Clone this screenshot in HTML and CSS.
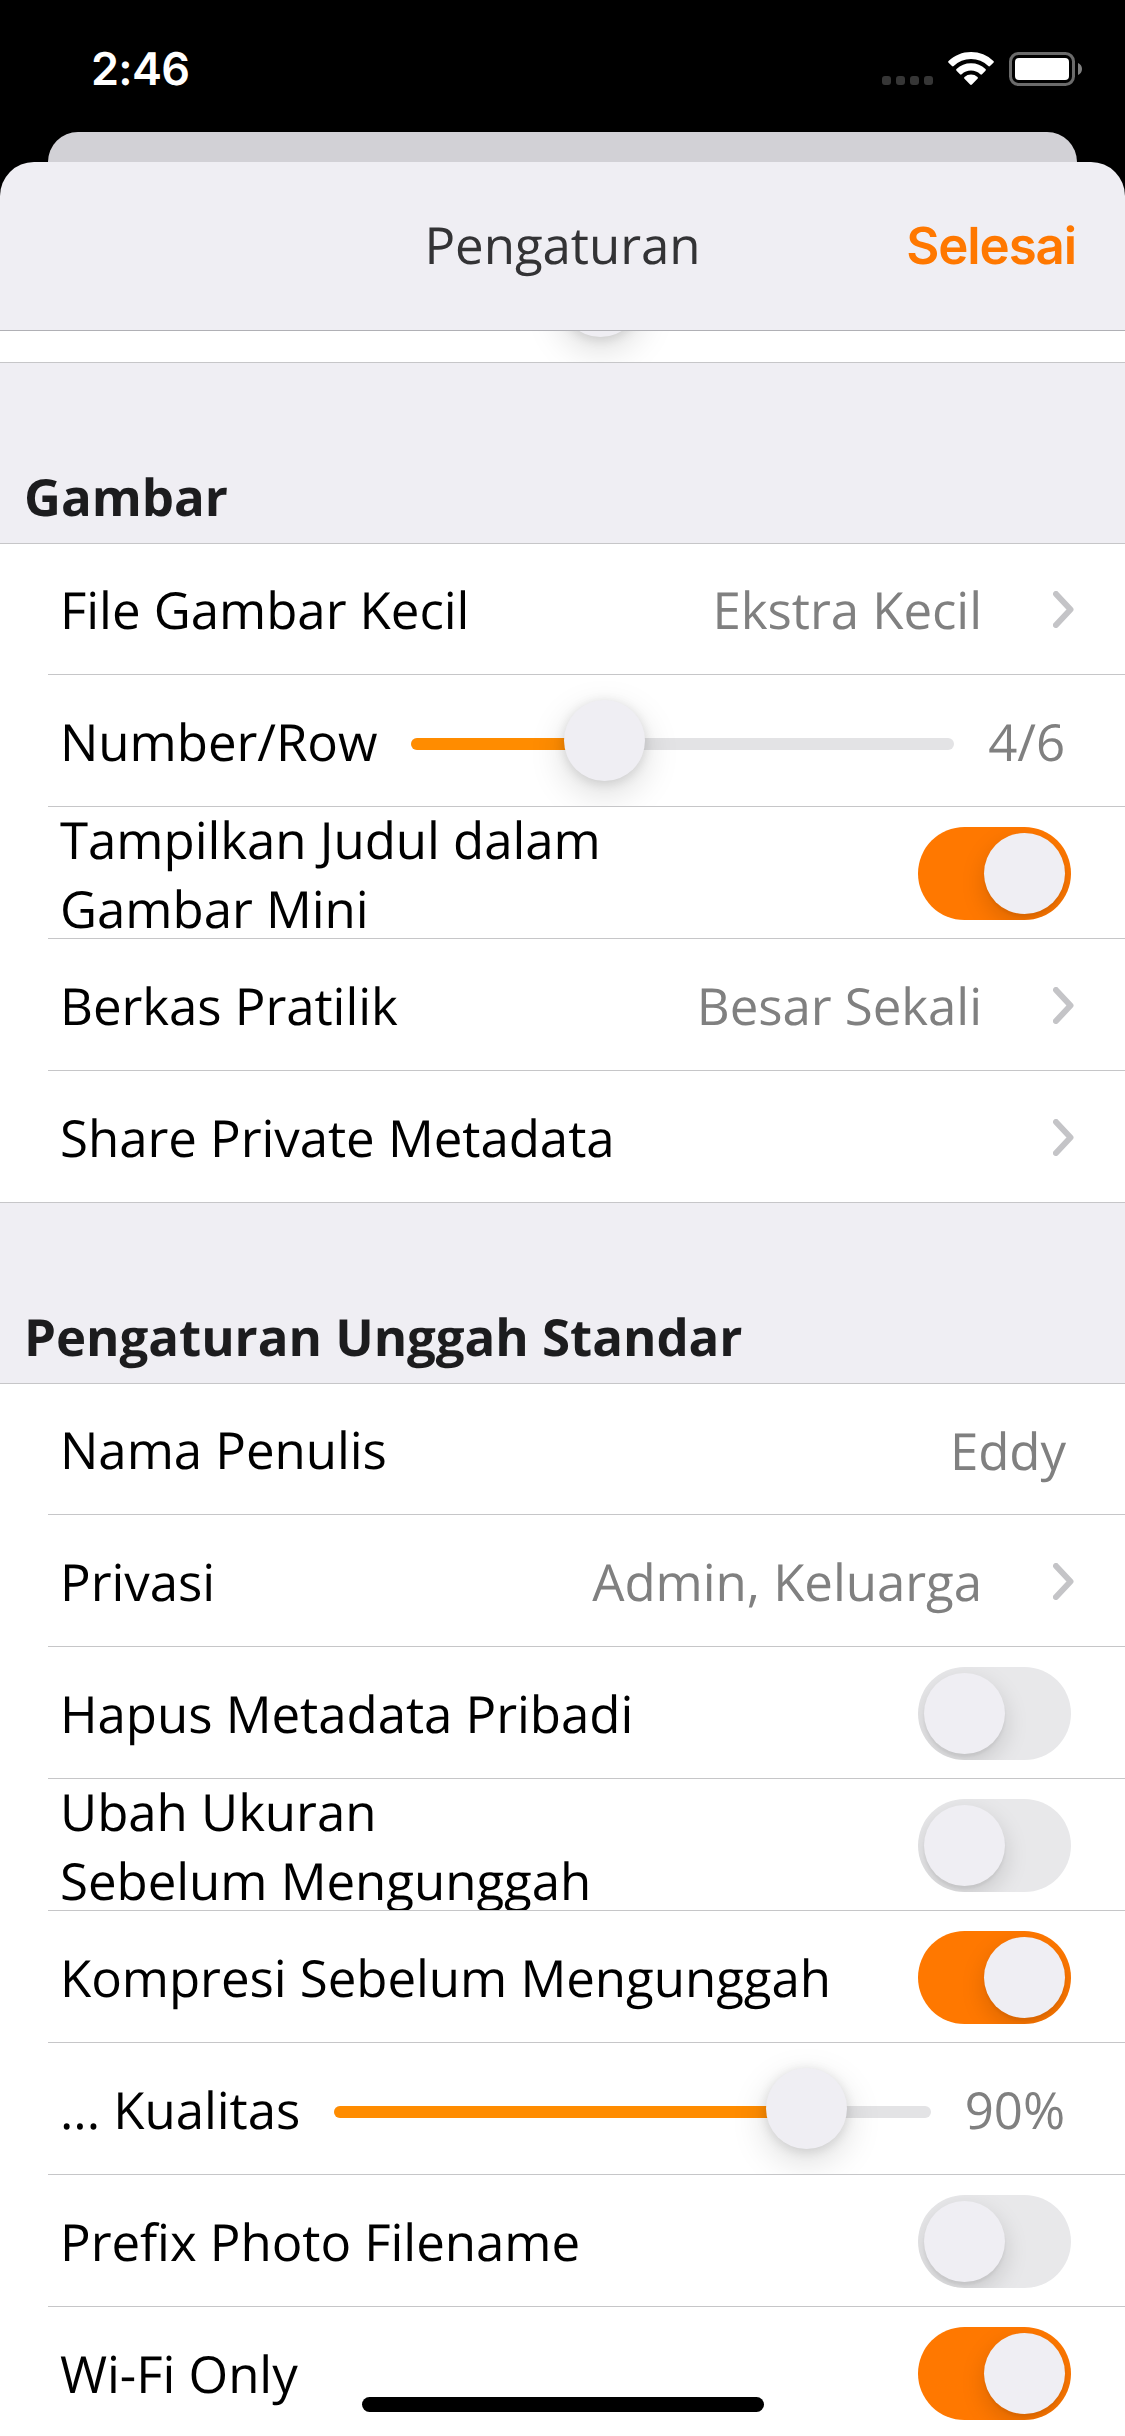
FILE: index.html
```html
<!DOCTYPE html>
<html lang="id">
<head>
<meta charset="utf-8">
<title>Pengaturan</title>
<link rel="stylesheet" href="styles.css">
</head>
<body>
<div class="screen">
  <header class="status">
    <span class="time">2:46</span>
    <div class="status-icons">
      <svg class="dots" viewBox="0 0 51 9"><g fill="#363636"><rect width="9" height="9" rx="3"/><rect x="14" width="9" height="9" rx="3"/><rect x="28" width="9" height="9" rx="3"/><rect x="42" width="9" height="9" rx="3"/></g></svg>
      <svg class="wifi" viewBox="0 0 46 34"><g fill="#fff"><path d="M23 0C14.300 0 6.400 3.400.6 8.900a1.200 1.200 0 0 0 0 1.800L4 14a1.200 1.200 0 0 0 1.700 0A25 25 0 0 1 23 7a25 25 0 0 1 17.300 7 1.200 1.200 0 0 0 1.700 0l3.400-3.300a1.200 1.200 0 0 0 0-1.800A32.500 32.500 0 0 0 23 0Z"/><path d="M23 11.300a21 21 0 0 0-14.500 5.800 1.200 1.200 0 0 0 0 1.700l3.500 3.400a1.200 1.200 0 0 0 1.700 0 13.600 13.600 0 0 1 18.600 0 1.200 1.200 0 0 0 1.700 0l3.500-3.400a1.200 1.200 0 0 0 0-1.700A21 21 0 0 0 23 11.300Z"/><path d="M23 22.600a10 10 0 0 0-6.500 2.400 1.200 1.200 0 0 0 0 1.800l5.600 5.700a1.300 1.300 0 0 0 1.800 0l5.600-5.700a1.200 1.200 0 0 0 0-1.800A10 10 0 0 0 23 22.600Z"/></g></svg>
      <svg class="battery" viewBox="0 0 73 34"><rect x="1.500" y="1.500" width="63" height="31" rx="8" fill="none" stroke="#6b6b6b" stroke-width="3"/><rect x="6" y="6" width="54" height="22" rx="4" fill="#fff"/><path d="M69 11c2.400 1 4 3.300 4 6s-1.600 5-4 6Z" fill="#808080"/></svg>
    </div>
  </header>
  <div class="back-card"></div>
  <main class="sheet">
    <nav class="navbar"><span></span><h1 class="title">Pengaturan</h1><a class="done">Selesai</a></nav>
    <div class="list">
      <section class="group scrolled">
        <div class="row"><div class="slider scrolled-slider"><div class="fill" style="width: 40%"></div><div class="thumb"></div></div></div>
      </section>
      <h2 class="heading">Gambar</h2>
      <section class="group">
        <div class="row"><span class="label">File Gambar Kecil</span><span class="value">Ekstra Kecil</span><svg class="chevron" viewBox="0 0 21 37"><path d="M3 3L17.500 18.500L3 34"/></svg></div>
        <div class="row"><span class="label">Number/Row</span><div class="slider count"><div class="fill" style="width: 35.600%"></div><div class="thumb"></div></div><span class="value count-value">4/6</span></div>
        <div class="row"><span class="label">Tampilkan Judul dalam<br>Gambar Mini</span><div class="switch on"><div class="knob"></div></div></div>
        <div class="row"><span class="label">Berkas Pratilik</span><span class="value">Besar Sekali</span><svg class="chevron" viewBox="0 0 21 37"><path d="M3 3L17.500 18.500L3 34"/></svg></div>
        <div class="row"><span class="label">Share Private Metadata</span><svg class="chevron" viewBox="0 0 21 37"><path d="M3 3L17.500 18.500L3 34"/></svg></div>
      </section>
      <h2 class="heading">Pengaturan Unggah Standar</h2>
      <section class="group">
        <div class="row"><span class="label">Nama Penulis</span><span class="value name">Eddy</span></div>
        <div class="row"><span class="label">Privasi</span><span class="value">Admin, Keluarga</span><svg class="chevron" viewBox="0 0 21 37"><path d="M3 3L17.500 18.500L3 34"/></svg></div>
        <div class="row"><span class="label">Hapus Metadata Pribadi</span><div class="switch"><div class="knob"></div></div></div>
        <div class="row"><span class="label">Ubah Ukuran<br>Sebelum Mengunggah</span><div class="switch"><div class="knob"></div></div></div>
        <div class="row"><span class="label">Kompresi Sebelum Mengunggah</span><div class="switch on"><div class="knob"></div></div></div>
        <div class="row"><span class="label">... Kualitas</span><div class="slider quality"><div class="fill" style="width: 79%"></div><div class="thumb"></div></div><span class="value quality-value">90%</span></div>
        <div class="row"><span class="label">Prefix Photo Filename</span><div class="switch"><div class="knob"></div></div></div>
        <div class="row"><span class="label">Wi-Fi Only</span><div class="switch on"><div class="knob"></div></div></div>
      </section>
    </div>
  </main>
  <div class="home-indicator"></div>
</div>
</body>
</html>
```
FILE: styles.css
```css
* { box-sizing: border-box; }
body { margin: 0; background: #000; }

.screen {
  position: relative;
  display: flex;
  flex-direction: column;
  width: 1125px;
  height: 2436px;
  overflow: hidden;
  background: #000;
  color: #000;
  font: 51px/69px "Open Sans", sans-serif;
  letter-spacing: -.05px;
  text-rendering: geometricPrecision;
}

/* Status bar */
.status {
  display: flex;
  justify-content: space-between;
  height: 132px;
  padding: 52px 43px 0 91px;
  flex: none;
}
.time {
  color: #fff;
  font: 600 45px/34px Inter, sans-serif;
  letter-spacing: -.7px;
}
.status-icons { display: flex; height: 34px; }
.dots { width: 51px; height: 9px; margin: 24px 15px 0 0; }
.wifi { width: 46px; height: 34px; margin-right: 15px; }
.battery { width: 73px; height: 34px; }

/* Sheet */
.back-card {
  flex: none;
  height: 30px;
  margin: 0 48px;
  border-radius: 30px 30px 0 0;
  background: #d2d1d6;
}
.sheet {
  flex: 1;
  min-height: 0;
  display: flex;
  flex-direction: column;
  overflow: hidden;
  border-radius: 34px 34px 0 0;
  background: #efeef3;
}
.navbar {
  flex: none;
  display: grid;
  grid-template-columns: 1fr auto 1fr;
  align-items: center;
  height: 169px;
  padding: 0 48px 3px;
  border-bottom: 1px solid #b0b0b5;
}
.title {
  margin: 0;
  color: #333335;
  font-size: 51px;
  font-weight: 400;
}
.done {
  justify-self: end;
  padding: 3px 1px 0 0;
  color: #ff7800;
  font: 600 51px/69px Inter, sans-serif;
  letter-spacing: -1.1px;
}

/* List */
.list { flex: 1; min-height: 0; overflow: hidden; }
.group {
  border-bottom: 1px solid #c6c6c8;
  background: #fff;
}
.heading {
  display: flex;
  align-items: flex-end;
  height: 181px;
  margin: 0;
  padding: 0 24px 12px;
  border-bottom: 1px solid #c6c6c8;
  color: #1c1c1e;
  font-size: 51px;
  font-weight: 700;
}
.scrolled {
  display: flex;
  flex-direction: column;
  justify-content: flex-end;
  height: 32px;
  overflow: hidden;
}
.row {
  flex: none;
  display: flex;
  align-items: center;
  height: 132px;
  margin-left: 48px;
  padding: 2px 54px 0 12px;
  overflow: hidden;
  border-bottom: 1px solid #c6c6c8;
}
.row:first-child { height: 131px; padding-top: 0; }
.row:last-child { height: 131px; padding-top: 2px; border-bottom: 0; }
.label { flex: none; white-space: nowrap; }
.value { margin-left: auto; color: #808080; white-space: nowrap; }
.name { padding: 2px 5px 0 0; }
.count-value, .quality-value {
  flex: none;
  margin-left: 0;
  padding-right: 6px;
  text-align: right;
}
.count-value { width: 117px; }
.quality-value { width: 140px; }
.chevron {
  flex: none;
  width: 21px;
  height: 37px;
  margin-left: 71px;
  margin-right: -3px;
  fill: none;
  stroke: #c4c4c7;
  stroke-width: 6;
  stroke-linecap: round;
  stroke-linejoin: round;
}
.label + .chevron { margin-left: auto; }

/* Slider */
.slider {
  flex: none;
  display: flex;
  align-items: center;
  height: 12px;
  margin: 5px 0 0 auto;
  border-radius: 6px;
  background: #e3e3e5;
}
.count { width: 543px; }
.quality { width: 597px; }
.scrolled-slider { width: 543px; margin-left: 323px; }
.fill { flex: none; height: 12px; border-radius: 6px; background: #ff8c00; }
.thumb {
  flex: none;
  width: 81px;
  height: 81px;
  margin: -7px 0 0 -40px;
  border-radius: 50%;
  background: #efeef3;
  box-shadow: 0 12px 36px rgba(0, 0, 0, .15), 0 2px 12px rgba(0, 0, 0, .12);
}

/* Switch */
.switch {
  flex: none;
  display: flex;
  width: 153px;
  height: 93px;
  margin-left: auto;
  padding: 6px;
  overflow: hidden;
  border-radius: 47px;
  background: #e8e8ea;
}
.switch.on { justify-content: flex-end; background: #ff7800; }
.knob {
  width: 81px;
  height: 81px;
  border-radius: 50%;
  background: #efeef3;
  box-shadow: 0 9px 24px rgba(0, 0, 0, .15), 0 3px 3px rgba(0, 0, 0, .05);
}

.home-indicator {
  position: absolute;
  left: 362px;
  bottom: 24px;
  width: 402px;
  height: 15px;
  border-radius: 8px;
  background: #000;
}
```
